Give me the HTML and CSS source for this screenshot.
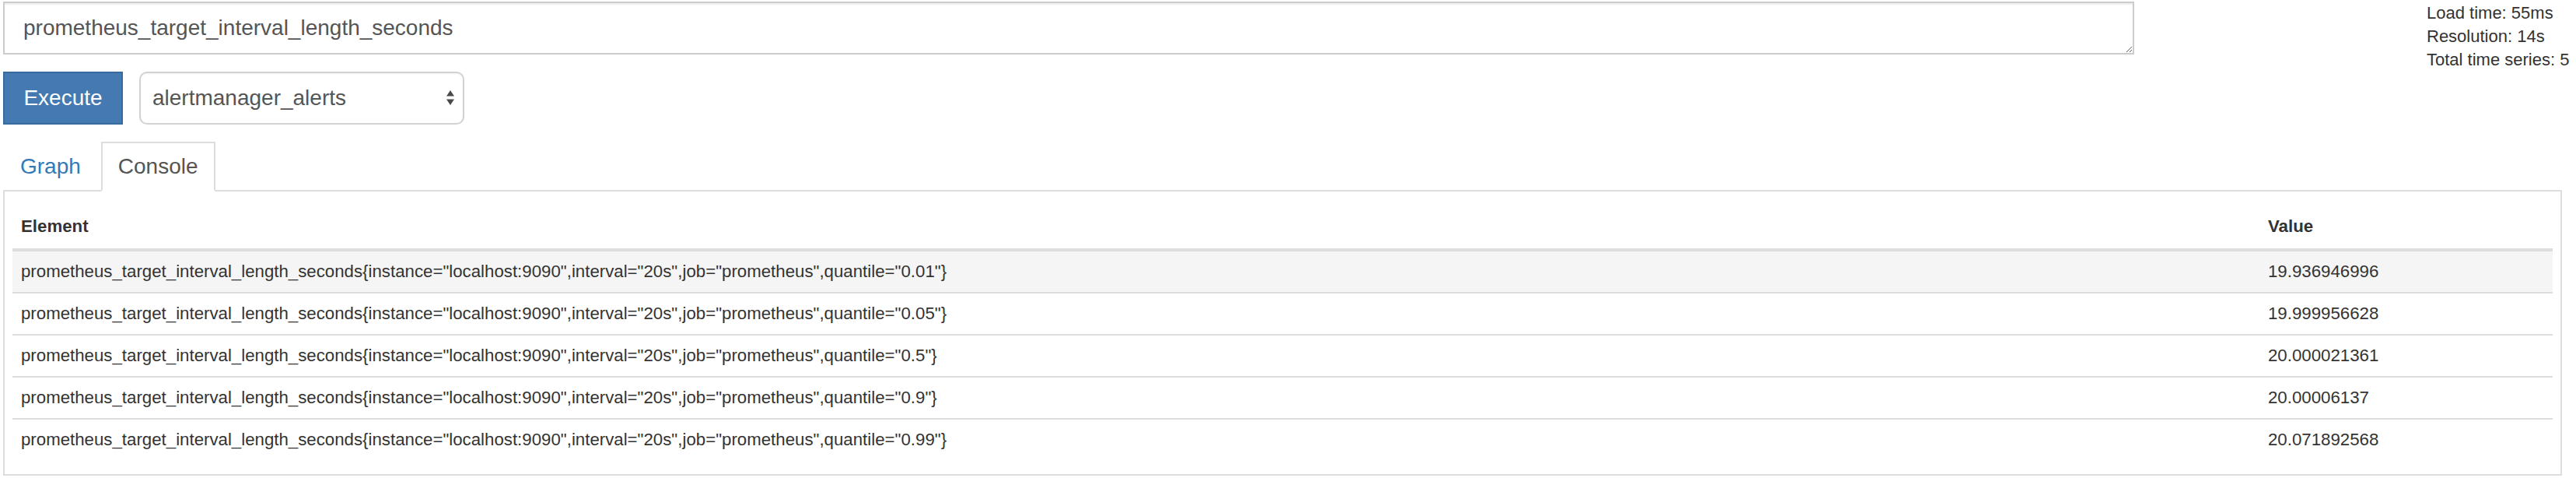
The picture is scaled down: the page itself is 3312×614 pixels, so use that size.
FILE: index.html
```html
<!DOCTYPE html>
<html>
<head>
<meta charset="utf-8">
<link rel="stylesheet" href="styles.css">
</head>
<body>
<div class="top">
  <textarea class="expr" spellcheck="false">prometheus_target_interval_length_seconds</textarea>
  <div class="stats">
    <div>Load time: 55ms</div>
    <div>Resolution: 14s</div>
    <div>Total time series: 5</div>
  </div>
</div>
<div class="controls">
  <button class="btn-exec">Execute</button>
  <div class="select">
    <span>alertmanager_alerts</span>
    <svg class="arrows" width="10" height="19" viewBox="0 0 10 19"><path d="M5 0 L10 7.5 L0 7.5 Z M5 19 L10 11.5 L0 11.5 Z" fill="#4a4a4a"/></svg>
  </div>
</div>
<div class="tabs-wrap">
  <div class="tabs">
    <div class="tab">Graph</div>
    <div class="tab active">Console</div>
  </div>
  <div class="panel">
    <table class="console">
      <thead>
        <tr><th>Element</th><th class="val">Value</th></tr>
      </thead>
      <tbody>
        <tr class="hover"><td>prometheus_target_interval_length_seconds{instance="localhost:9090",interval="20s",job="prometheus",quantile="0.01"}</td><td>19.936946996</td></tr>
        <tr><td>prometheus_target_interval_length_seconds{instance="localhost:9090",interval="20s",job="prometheus",quantile="0.05"}</td><td>19.999956628</td></tr>
        <tr><td>prometheus_target_interval_length_seconds{instance="localhost:9090",interval="20s",job="prometheus",quantile="0.5"}</td><td>20.000021361</td></tr>
        <tr><td>prometheus_target_interval_length_seconds{instance="localhost:9090",interval="20s",job="prometheus",quantile="0.9"}</td><td>20.00006137</td></tr>
        <tr><td>prometheus_target_interval_length_seconds{instance="localhost:9090",interval="20s",job="prometheus",quantile="0.99"}</td><td>20.071892568</td></tr>
      </tbody>
    </table>
  </div>
</div>
</body>
</html>
```
FILE: styles.css
```css
* { box-sizing: border-box; }
html, body { margin: 0; padding: 0; background: #fff; }
body {
  font-family: "Liberation Sans", Arial, Helvetica, sans-serif;
  color: #333;
  width: 3312px;
  height: 614px;
  overflow: hidden;
}
.top {
  display: flex;
  align-items: flex-start;
  height: 70px;
}
.expr {
  display: block;
  width: 2740px;
  height: 68px;
  margin: 2px 0 0 4px;
  padding: 12px 24px;
  font-family: "Liberation Sans", Arial, sans-serif;
  font-size: 28px;
  line-height: 40px;
  color: #555;
  border: 2px solid #ccc;
  border-radius: 0;
  box-shadow: inset 0 2px 2px rgba(0,0,0,0.075);
  resize: vertical;
  overflow: hidden;
  outline: none;
}
.stats {
  margin-left: auto;
  width: 192px;
  padding-top: 2px;
  font-size: 22px;
  line-height: 30px;
  white-space: nowrap;
  color: #333;
}
.controls {
  display: flex;
  gap: 21px;
  margin: 22px 0 0 4px;
}
.btn-exec {
  width: 154px;
  height: 68px;
  background: #4479b1;
  border: 2px solid #386a9e;
  color: #fff;
  font-family: "Liberation Sans", Arial, sans-serif;
  font-size: 28px;
  padding: 0;
  border-radius: 0;
}
.select {
  position: relative;
  width: 418px;
  height: 68px;
  border: 2px solid #d2d2d2;
  border-radius: 10px;
  box-shadow: inset 0 1px 2px rgba(0,0,0,0.06);
  padding: 0 15px;
  display: flex;
  align-items: center;
  font-size: 28px;
  color: #555;
}
.arrows {
  position: absolute;
  right: 11px;
  top: 22px;
}
.tabs-wrap {
  margin: 22px 0 0 4px;
  width: 3290px;
}
.tabs {
  display: flex;
  gap: 4px;
  border-bottom: 2px solid #ddd;
  height: 64px;
}
.tab {
  height: 64px;
  padding: 10px 20px;
  border: 2px solid transparent;
  line-height: 40px;
  font-size: 28px;
  color: #337ab7;
}
.tab.active {
  color: #555;
  border-color: #ddd;
  border-bottom-color: #fff;
  background: #fff;
  height: 64px;
  margin-bottom: -2px;
}
.panel {
  border: 2px solid #ddd;
  border-top: none;
  padding: 14px 10px 18px 10px;
}
.console {
  width: 100%;
  border-collapse: collapse;
  font-size: 22.25px;
}
.console th {
  text-align: left;
  font-weight: bold;
  padding: 16px 11px 13px 11px;
  line-height: 30px;
  border-bottom: 4px solid #ddd;
}
.console th.val { width: 377px; }
.console td {
  padding: 11px 11px;
  line-height: 30px;
  border-top: 2px solid #ddd;
  white-space: nowrap;
}
.console tbody tr:first-child td { border-top: none; }
.console tr.hover td { background: #f5f5f5; }
```
